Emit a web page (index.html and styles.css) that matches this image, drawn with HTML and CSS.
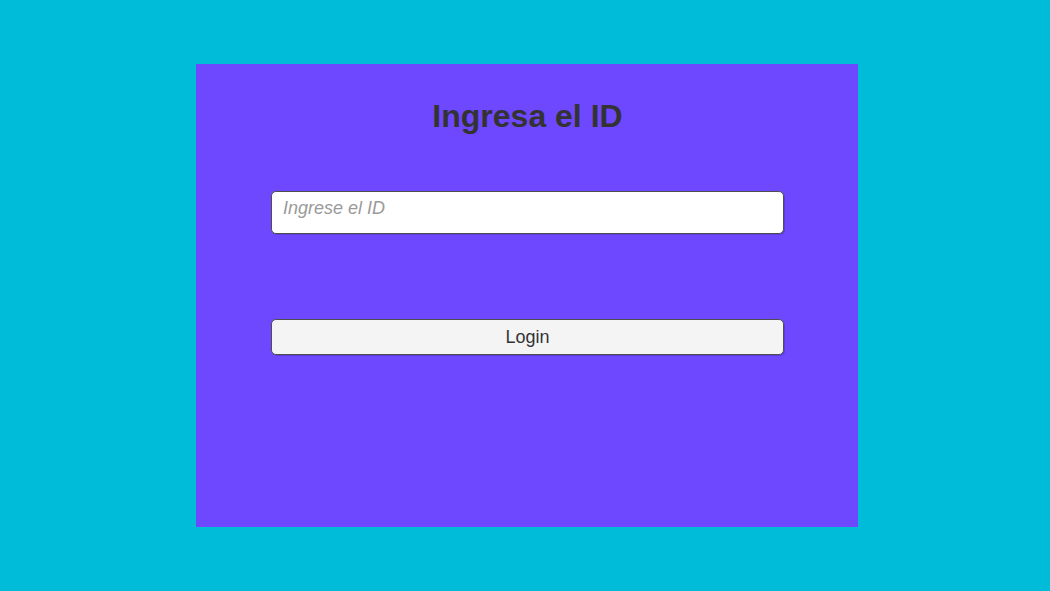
FILE: index.html
```html
<!DOCTYPE html>
<html lang="es">
<head>
<meta charset="utf-8">
<title>Ingresa el ID</title>
<link rel="stylesheet" href="styles.css">
</head>
<body>
<main class="panel">
  <h1 class="title">Ingresa el ID</h1>
  <div class="form">
    <input class="field" type="text" placeholder="Ingrese el ID">
    <button class="btn" type="button">Login</button>
  </div>
</main>
</body>
</html>
```

FILE: styles.css
```css
html, body {
  margin: 0;
  padding: 0;
}
body {
  width: 1050px;
  height: 591px;
  background: #00bcd8;
  font-family: "Liberation Sans", Arial, sans-serif;
  overflow: hidden;
  padding-top: 64px;
  box-sizing: border-box;
}
.panel {
  width: 662px;
  height: 463px;
  margin-left: 196px;
  background: #6e48ff;
  box-sizing: border-box;
  padding-top: 32px;
  display: flex;
  flex-direction: column;
}
.title {
  margin: 0;
  font-size: 32px;
  line-height: 40px;
  font-weight: bold;
  color: #333333;
  text-align: center;
  padding-left: 1px;
}
.form {
  margin-top: 55px;
  margin-left: 75px;
  width: 513px;
  display: flex;
  flex-direction: column;
  gap: 85px;
}
.field {
  box-sizing: border-box;
  width: 100%;
  height: 43px;
  margin: 0;
  padding: 6px 11px 15px;
  border: 1px solid #4f4f4f;
  border-radius: 5px;
  background: #ffffff;
  font-family: "Liberation Sans", Arial, sans-serif;
  font-size: 18px;
  line-height: 20px;
  color: #333;
  outline: none;
  display: block;
  box-shadow: 1px 1px 0 rgba(0, 0, 0, 0.15);
}
.field::placeholder {
  color: #9a9a9a;
  font-style: italic;
}
.btn {
  box-sizing: border-box;
  width: 100%;
  height: 36px;
  margin: 0;
  padding: 0;
  border: 1px solid #4f4f4f;
  border-radius: 5px;
  background: #f4f4f4;
  font-family: "Liberation Sans", Arial, sans-serif;
  font-size: 18px;
  color: #333333;
  cursor: pointer;
  box-shadow: 1px 1px 0 rgba(0, 0, 0, 0.15);
}
```
